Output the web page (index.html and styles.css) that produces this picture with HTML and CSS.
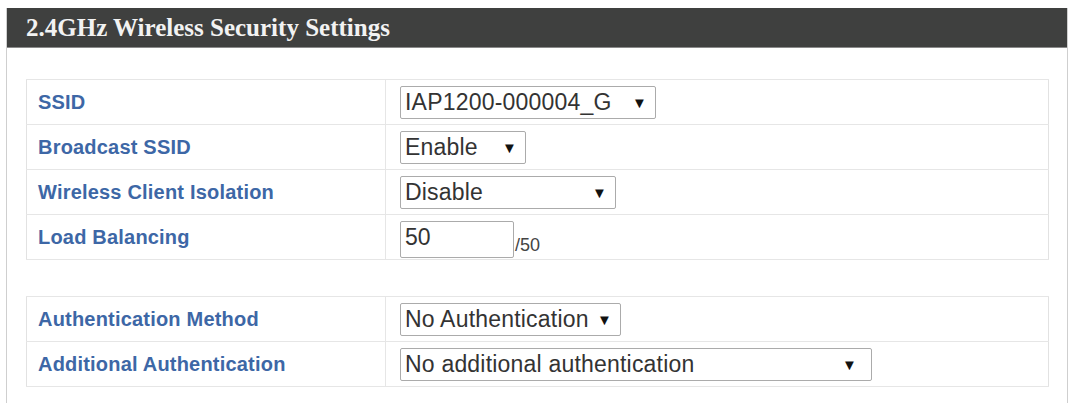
FILE: index.html
```html
<!DOCTYPE html>
<html lang="en">
<head>
    <meta charset="UTF-8">
    <title>Wireless Security</title>
    <link rel="stylesheet" href="styles.css">
</head>
<body>
    <div class="panel">
        <div class="panel-head">2.4GHz Wireless Security Settings</div>
        <div class="panel-body">
            <table class="settings">
                <tr>
                    <td class="label">SSID</td>
                    <td><span class="select w-ssid">IAP1200-000004_G <span class="arrow">&#9660;</span></span></td>
                </tr>
                <tr>
                    <td class="label">Broadcast SSID</td>
                    <td><span class="select w-enable">Enable <span class="arrow">&#9660;</span></span></td>
                </tr>
                <tr>
                    <td class="label">Wireless Client Isolation</td>
                    <td><span class="select w-disable">Disable <span class="arrow">&#9660;</span></span></td>
                </tr>
                <tr>
                    <td class="label">Load Balancing</td>
                    <td><span class="textbox">50</span><span class="max">/50</span></td>
                </tr>
            </table>

            <table class="settings">
                <tr>
                    <td class="label">Authentication Method</td>
                    <td><span class="select w-auth">No Authentication <span class="arrow">&#9660;</span></span></td>
                </tr>
                <tr>
                    <td class="label">Additional Authentication</td>
                    <td><span class="select w-add">No additional authentication <span class="arrow">&#9660;</span></span></td>
                </tr>
            </table>
        </div>
    </div>
</body>
</html>
```

FILE: styles.css
```css
body {
    margin: 0;
    padding: 0;
    background: #fff;
    font-family: "Liberation Sans", Arial, sans-serif;
}
.panel {
    margin: 8px 3px 0 6px;
    border-left: 1px solid #cfcfcf;
    border-right: 1px solid #cfcfcf;
    height: 395px;
}
.panel-head {
    background-color: #3f403f;
    color: #f2f2f2;
    font-family: "Liberation Serif", "Times New Roman", serif;
    font-weight: bold;
    font-size: 25px;
    height: 40px;
    line-height: 40px;
    padding-left: 19px;
    border-bottom: 1px solid #8a8a8a;
    box-sizing: border-box;
}
.panel-body {
    padding: 31px 18px 0 19px;
}
.settings {
    width: 100%;
    border-collapse: collapse;
    border: 1px solid #e2e2e2;
    margin-bottom: 36px;
}
.settings td {
    height: 45px;
    padding: 0 0 0 14px;
    border-top: 1px solid #e6e6e6;
    border-bottom: 1px solid #e6e6e6;
    box-sizing: border-box;
    vertical-align: middle;
}
.settings td.label {
    width: 359px;
    padding-left: 11px;
    border-right: 1px solid #e6e6e6;
    color: #3d67a6;
    font-weight: bold;
    font-size: 20px;
    letter-spacing: 0.2px;
}
.select, .textbox {
    display: inline-flex;
    align-items: center;
    justify-content: space-between;
    box-sizing: border-box;
    height: 33px;
    padding: 0 8px 0 4px;
    border: 1px solid #ababab;
    border-radius: 2px;
    font-size: 23px;
    letter-spacing: 0.2px;
    white-space: nowrap;
    color: #333;
    vertical-align: middle;
}
.arrow {
    font-size: 15px;
    color: #111;
    margin-left: 6px;
}
.w-ssid { width: 256px; }
.w-enable { width: 126px; }
.w-disable { width: 216px; }
.w-auth { width: 221px; }
.w-add { width: 472px; padding-right: 14px; }
.textbox {
    width: 114px;
    height: 37px;
    margin-top: 4px;
    align-items: flex-start;
    padding-top: 2px;
    letter-spacing: 0;
}
.max {
    font-size: 18px;
    color: #444;
    margin-left: 1px;
    vertical-align: -10px;
}
```
